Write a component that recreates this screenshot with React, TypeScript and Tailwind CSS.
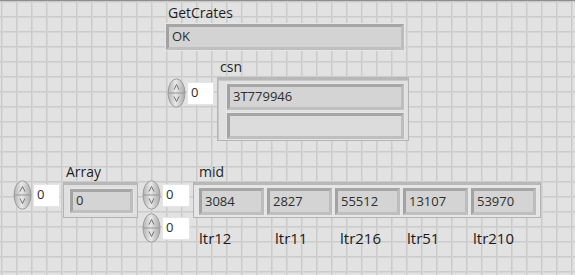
import React from "react";

const font = { fontFamily: '"Open Sans", "Noto Sans", sans-serif' };

function Spinner() {
  return (
    <svg width="19" height="30" viewBox="0 0 19 30">
      <defs>
        <linearGradient id="spg" x1="0" x2="1" y1="0" y2="0">
          <stop offset="0" stopColor="#b3b3b3" />
          <stop offset="0.45" stopColor="#e8e8e8" />
          <stop offset="1" stopColor="#a9a9a9" />
        </linearGradient>
      </defs>
      <ellipse cx="9.5" cy="15" rx="8.5" ry="14.2" fill="url(#spg)" stroke="#9c9c9c" />
      <line x1="1.5" y1="15" x2="17.5" y2="15" stroke="#959595" />
      <path d="M9.5 6.5 L7 11.5 M9.5 6.5 L12 11.5" stroke="#666" strokeWidth="0.9" fill="none" />
      <path d="M9.5 23.5 L7 18.5 M9.5 23.5 L12 18.5" stroke="#666" strokeWidth="0.9" fill="none" />
    </svg>
  );
}

function IndexCtl({ w = 27 }: { w?: number }) {
  return (
    <div className="flex items-center">
      <Spinner />
      <div
        className="ml-[1px] h-[23px] bg-white border border-[#e4e4e4] flex items-center pl-[3px] text-[13px] text-[#2a2a2a]"
        style={{ width: w }}
      >
        0
      </div>
    </div>
  );
}

function Ind({ w, h, text, fill = "#d4d4d4" }: { w: number; h: number; text?: string; fill?: string }) {
  return (
    <div
      className="border-[3px] border-t-[#a6a6a6] border-l-[#a3a3a3] border-r-[#bdbdbd] border-b-[#bfbfbf] flex items-center pl-[3px] text-[13px] text-[#2e2e2e] shadow-[0_0_0_1px_#e6e6e6]"
      style={{ width: w, height: h, background: fill }}
    >
      {text}
    </div>
  );
}

export default function App() {
  const mid = ["3084", "2827", "55512", "13107", "53970"];
  const ltr = [
    { t: "ltr12", c: "w-[82px] pl-[6px]" },
    { t: "ltr11", c: "w-[65px]" },
    { t: "ltr216", c: "w-[67px]" },
    { t: "ltr51", c: "w-[66px]" },
    { t: "ltr210", c: "w-[66px]" },
  ];
  return (
    <div
      style={font}
      className="relative w-[575px] h-[275px] overflow-hidden border-t border-[#8e8e8e] bg-[#e2e2e2] bg-[linear-gradient(to_right,#cbcbcb_1px,#d6d6d6_1px,#d6d6d6_2px,transparent_2px),linear-gradient(to_bottom,#cbcbcb_1px,#d6d6d6_1px,#d6d6d6_2px,transparent_2px)] bg-[size:15px_15px] bg-[position:1px_0px]"
    >
      {/* GetCrates */}
      <div className="absolute left-[166px] top-[1px] flex flex-col">
        <div className="pl-[2px] text-[14px] leading-[22px] text-[#1e1e1e]">GetCrates</div>
        <Ind w={238} h={26} text="OK" fill="#d3d3d3" />
      </div>

      {/* csn */}
      <div className="absolute left-[167px] top-[56px] flex flex-col">
        <div className="ml-[53px] text-[14px] leading-[20px] text-[#1e1e1e]">csn</div>
        <div className="flex items-start">
          <div className="mt-[1px]">
            <IndexCtl w={27} />
          </div>
          <div className="ml-[3px] w-[192px] h-[64px] bg-[#e0e0e0] border border-[#b3b3b3] border-t-[3px] border-t-[#b8b8b8] pl-[9px] pr-[4px] pt-[4px] flex flex-col gap-[3px] shadow-[inset_1px_1px_0_#c8c8c8]">
            <Ind w={177} h={26} text="3T779946" fill="#d4d4d4" />
            <Ind w={177} h={26} fill="#dcdcdc" />
          </div>
        </div>
      </div>

      {/* Array */}
      <div className="absolute left-[13px] top-[161px] flex items-start">
        <div className="mt-[18px]">
          <IndexCtl w={27} />
        </div>
        <div className="ml-[3px] flex flex-col">
          <div className="ml-[3px] text-[14px] leading-[20px] text-[#1e1e1e]">Array</div>
          <div className="w-[75px] h-[36px] bg-[#e0e0e0] border border-[#b3b3b3] border-t-[3px] border-t-[#b8b8b8] pl-[6px] pt-[4px]">
            <Ind w={63} h={24} text="0" fill="#d4d4d4" />
          </div>
        </div>
      </div>

      {/* mid */}
      <div className="absolute left-[142px] top-[161px] flex items-start">
        <div className="mt-[18px] flex flex-col gap-[3px]">
          <IndexCtl w={28} />
          <IndexCtl w={28} />
        </div>
        <div className="ml-[3px] flex flex-col">
          <div className="ml-[6px] text-[14px] leading-[20px] text-[#1e1e1e]">mid</div>
          <div className="w-[348px] h-[36px] bg-[#e6e6e6] border border-[#b3b3b3] border-t-[3px] border-t-[#b8b8b8] pl-[5px] pt-[3px] flex gap-[3px]">
            {mid.map((m) => (
              <Ind key={m} w={65} h={27} text={m} fill="#d4d4d4" />
            ))}
          </div>
          <div className="mt-[9px] flex text-[15px] leading-[22px] text-[#1a1a1a]">
            {ltr.map((l) => (
              <div key={l.t} className={l.c}>
                {l.t}
              </div>
            ))}
          </div>
        </div>
      </div>
    </div>
  );
}
